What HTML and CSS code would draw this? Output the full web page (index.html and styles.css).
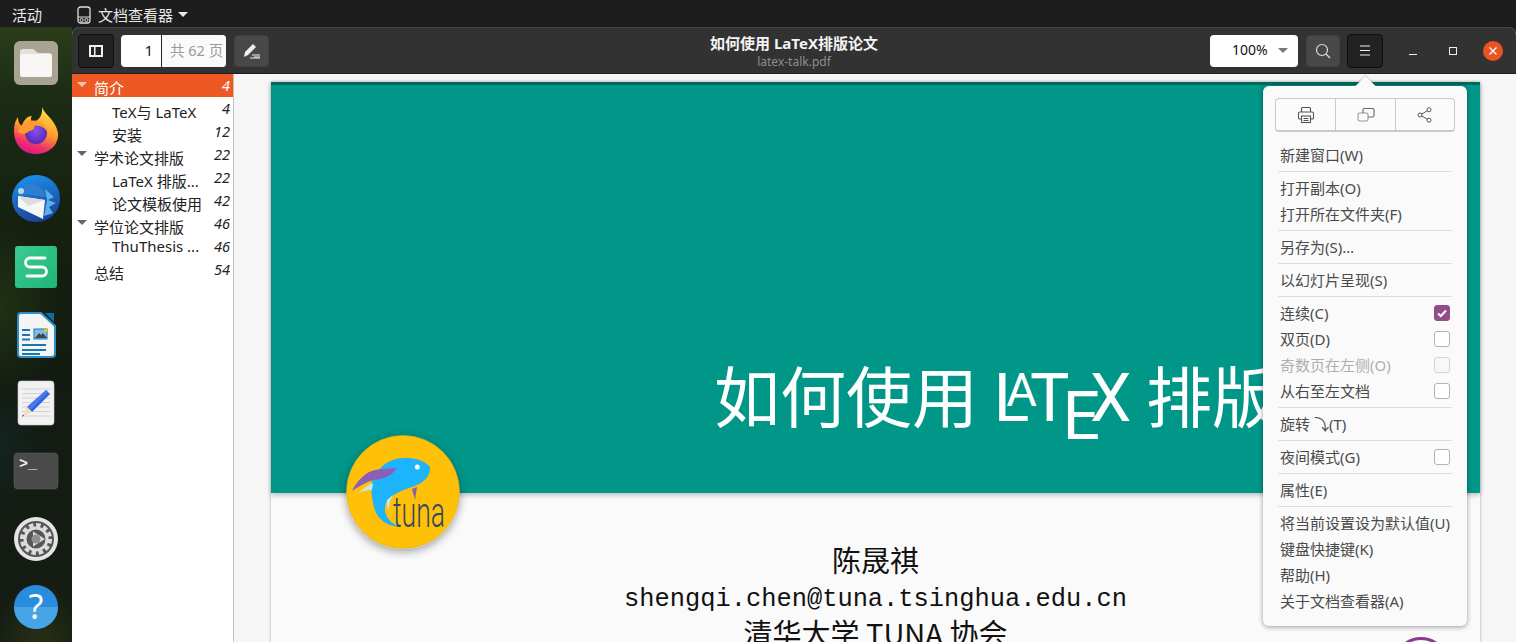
FILE: index.html
```html
<!DOCTYPE html>
<html lang="zh-CN">
<head>
<meta charset="utf-8">
<title>如何使用 LaTeX排版论文</title>
<link rel="stylesheet" href="styles.css">
</head>
<body>
<header class="topbar">
  <span class="activities">活动</span>
  <span class="appmenu">
    <svg class="appicon" width="14" height="18" viewBox="0 0 14 18"><rect x="1" y="1" width="12" height="16" rx="2.500" fill="none" stroke="#ddd" stroke-width="1.300"/><path d="M1 11h12" stroke="#ddd"/><circle cx="4.600" cy="14" r="1.600" fill="none" stroke="#ddd"/><circle cx="9.400" cy="14" r="1.600" fill="none" stroke="#ddd"/></svg>
    <span>文档查看器</span><i class="tri tri-top"></i>
  </span>
</header>
<div class="desktop">
  <nav class="dock">
    <svg class="dockicon" viewBox="0 0 48 48"><rect x="2" y="2" width="44" height="44" rx="6" fill="#a9a394"/><path d="M8 13a3 3 0 0 1 3-3h10l5 4h11a3 3 0 0 1 3 3v18a3 3 0 0 1-3 3H11a3 3 0 0 1-3-3z" fill="#e4e1da"/><path d="M8 18a3 3 0 0 1 3-3h26a3 3 0 0 1 3 3v17a3 3 0 0 1-3 3H11a3 3 0 0 1-3-3z" fill="#f8f7f5"/></svg>
    <svg class="dockicon" viewBox="0 0 48 48"><defs><linearGradient id="ff" x1="0.7" y1="0" x2="0.35" y2="1"><stop offset="0" stop-color="#ffe14a"/><stop offset="0.5" stop-color="#ff9a2a"/><stop offset="0.8" stop-color="#f0306a"/><stop offset="1" stop-color="#d9168c"/></linearGradient><radialGradient id="ffp" cx="0.5" cy="0.4" r="0.7"><stop offset="0" stop-color="#8a50ef"/><stop offset="1" stop-color="#4a22a8"/></radialGradient></defs><path d="M30 0C32 7 44 13 46 26 47 38 37 47 24 47 11 47 2 38 2 24 2 18 3 14 6 10 6 15 8 18 10 19 11 14 15 9 20 9 18 12 19 15 22 15 27 13 31 8 30 0Z" fill="url(#ff)"/><circle cx="24" cy="26" r="11" fill="url(#ffp)"/><path d="M6 25C8 16 18 11 28 15 34 18 36 22 36 26 33 20 27 18 22 19 24 21 20 24 17 24 15 27 10 28 6 25Z" fill="#ff9a2e"/></svg>
    <svg class="dockicon" viewBox="0 0 48 48"><defs><linearGradient id="tb" x1="0.3" y1="0" x2="0.6" y2="1"><stop offset="0" stop-color="#1a90e8"/><stop offset="1" stop-color="#1c3f9a"/></linearGradient></defs><path d="M24 0C38 0 48 10 48 24 48 36 38 47 24 47 10 47 0 36 0 24 0 12 10 0 24 0Z" fill="url(#tb)"/><path d="M6 22C8 12 14 9 20 9 26 9 32 14 34 22L12 19Z" fill="#2e7fd2"/><path d="M6 21l27 4-2 19-25-12z" fill="#f6f6f6"/><path d="M6 21l27 4-17 6z" fill="#dcdcdc"/><path d="M33 14l9 8-6 3 8 3-7 4 4 6-9 3 3-16z" fill="#5ab0ec"/><circle cx="9" cy="16" r="3" fill="#bcd8f2"/></svg>
    <svg class="dockicon" viewBox="0 0 48 48"><defs><linearGradient id="wps" x1="0" y1="0" x2="1" y2="1"><stop offset="0" stop-color="#3acb91"/><stop offset="1" stop-color="#1fb578"/></linearGradient></defs><rect x="3" y="3" width="42" height="42" rx="3" fill="url(#wps)"/><path d="M33 15H18a4.500 4.500 0 0 0 0 9h12a4.500 4.500 0 0 1 0 9H15" fill="none" stroke="#fff" stroke-width="2.800" stroke-linecap="round"/></svg>
    <svg class="dockicon" viewBox="0 0 48 48"><path d="M9 2h20l14 13v28a3 3 0 0 1-3 3H9a3 3 0 0 1-3-3V5a3 3 0 0 1 3-3z" fill="#f4f4f4" stroke="#2b8ec4" stroke-width="2"/><path d="M33 2h9v9z" fill="#0f6ea6"/><path d="M10 18h8v2h-8zM10 23h8v2h-8zM10 27.500h8v2h-8zM10 33h24v2H10zM10 38h24v2H10zM10 42h18v2H10z" fill="#1878b6"/><rect x="22" y="18" width="13" height="10" fill="#7fbfe6" stroke="#1878b6"/><path d="M23 27l4-5 2 2 2-2 4 5z" fill="#444"/><rect x="32" y="18" width="3" height="3" fill="#f2c300"/></svg>
    <svg class="dockicon" viewBox="0 0 48 48"><rect x="6" y="2" width="36" height="44" rx="3" fill="#f1f1f1" stroke="#cfcfcf" stroke-width="0.600"/><path d="M10 10h28M10 14.500h28M10 19h28M10 23.500h28M10 28h28M10 32.500h28M10 37h28" stroke="#d2d2d2" stroke-width="1"/><path d="M34 11l4 4-18 18-5-5z" fill="#3262e0"/><path d="M34 11l2 2-18 18-2-2z" fill="#4a7cf0"/><path d="M15 28l5 5-10 5z" fill="#f5dcbc"/><path d="M12 36.500l-2 1.500 1-2.500z" fill="#444"/></svg>
    <svg class="dockicon" viewBox="0 0 48 48"><rect x="2" y="6" width="44" height="36" rx="4" fill="#4a4a4a" stroke="#5c5c5c" stroke-width="0.600"/><text class="termtext" x="7" y="21">&gt;_</text></svg>
    <svg class="dockicon" viewBox="0 0 48 48"><circle cx="24" cy="24" r="22" fill="#e4e4e4"/><circle cx="24" cy="24" r="18" fill="#565656"/><circle cx="24" cy="24" r="14" fill="none" stroke="#dcdcdc" stroke-width="4" stroke-dasharray="4.500 2.800"/><circle cx="24" cy="24" r="11" fill="none" stroke="#dcdcdc" stroke-width="3"/><path d="M21 16.500L33 24 21 31.500z" fill="#dcdcdc"/><circle cx="24" cy="24" r="4.500" fill="#8f8f8f"/></svg>
    <svg class="dockicon" viewBox="0 0 48 48"><circle cx="24" cy="24" r="22" fill="#2a8cdf"/><path d="M2 24h44a22 22 0 0 1-44 0z" fill="#45a5e6"/><text class="helptext" x="24" y="36">?</text></svg>
  </nav>

  <div class="window">
    <div class="headerbar">
      <div class="hb-left">
        <button class="btn btn-on btn-w36"><svg width="14" height="12" viewBox="0 0 14 12"><rect x="1" y="1" width="12" height="10" fill="none" stroke="#f2f2f2" stroke-width="2"/><rect x="5" y="1" width="1.500" height="10" fill="#f2f2f2"/></svg></button>
        <div class="spinner"><span class="pg-cur">1</span><span class="pg-total">共 62 页</span></div>
        <button class="btn btn-gray btn-w35"><svg width="18" height="16" viewBox="0 0 18 16"><path d="M10 1l3 3-8 8-4 2 1-5z" fill="#f0f0f0"/><path d="M9 12h8M11 14h6M7 15h10" stroke="#f0f0f0" stroke-width="1"/></svg></button>
      </div>
      <div class="hb-title">
        <div class="title">如何使用 LaTeX排版论文</div>
        <div class="subtitle">latex-talk.pdf</div>
      </div>
      <div class="hb-right">
        <div class="zoombox"><span>100%</span><i class="tri tri-zoom"></i></div>
        <button class="btn btn-gray btn-w34"><svg width="16" height="16" viewBox="0 0 16 16"><circle cx="7" cy="7" r="5.500" fill="none" stroke="#ddd" stroke-width="1.200"/><path d="M11 11l4 4" stroke="#ddd" stroke-width="1.300"/></svg></button>
        <button class="btn btn-on btn-w36"><svg width="12" height="11" viewBox="0 0 12 11"><path d="M1 1h10M1 5.500h10M1 10h10" stroke="#f2f2f2" stroke-width="1"/></svg></button>
        <div class="winctl">
          <span class="wc"><svg width="10" height="10" viewBox="0 0 10 10"><path d="M1 8.500h8" stroke="#eee" stroke-width="1"/></svg></span>
          <span class="wc"><svg width="10" height="10" viewBox="0 0 10 10"><rect x="1.500" y="1.500" width="7" height="7" fill="none" stroke="#eee" stroke-width="1"/></svg></span>
          <span class="wc wc-close"><svg width="10" height="10" viewBox="0 0 10 10"><path d="M1 1l8 8M9 1l-8 8" stroke="#fff" stroke-width="1.300"/></svg></span>
        </div>
      </div>
    </div>

    <div class="main">
      <aside class="sidebar">
        <div class="row row-sel"><i class="tri tri-sel"></i><span class="lbl">简介</span><em>4</em></div>
        <div class="row sub"><span class="lbl">TeX与 LaTeX</span><em>4</em></div>
        <div class="row sub"><span class="lbl">安装</span><em>12</em></div>
        <div class="row"><i class="tri tri-side"></i><span class="lbl">学术论文排版</span><em>22</em></div>
        <div class="row sub"><span class="lbl">LaTeX 排版...</span><em>22</em></div>
        <div class="row sub"><span class="lbl">论文模板使用</span><em>42</em></div>
        <div class="row"><i class="tri tri-side"></i><span class="lbl">学位论文排版</span><em>46</em></div>
        <div class="row sub latin"><span class="lbl">ThuThesis ...</span><em>46</em></div>
        <div class="row plain"><span class="lbl">总结</span><em>54</em></div>
      </aside>
      <section class="viewer">
        <article class="slide">
          <div class="slide-head">
            <h1 class="slide-title">如何使用 <span class="latex"><span class="l-l">L</span><span class="l-a">A</span><span class="l-t">T</span><span class="l-e">E</span><span class="l-x">X</span></span> 排版</h1>
          </div>
          <div class="slide-body">
            <div class="author">陈晟祺</div>
            <div class="email">shengqi.chen@tuna.tsinghua.edu.cn</div>
            <div class="org">清华大学 TUNA 协会</div>
          </div>
          <div class="avatar">
            <svg width="114" height="114" viewBox="0 0 114 114">
              <circle cx="57" cy="57" r="56.500" fill="#ffc107" stroke="#d9a520" stroke-width="0.600"/>
              <path d="M47 25C60 20 78 24 84 32 85 42 76 49 66 52 56 55 44 60 40 68 36 78 43 88 54 92 40 91 31 84 28 72 25 60 24 50 27 44 30 36 38 28 47 25Z" fill="#1eb4fb"/>
              <path d="M51 33C40 34 28 33 20 39 13 44 9 50 6 56 13 51 20 47 28 45 37 44 46 41 51 33Z" fill="#8a5fb5"/>
              <path d="M12 58C17 54 22 50 27 48L26 55C21 55 16 56 12 58Z" fill="#c9e6e0"/>
              <path d="M66 54L71 52 69 65Z" fill="#8a5fb5"/>
              <path d="M41 65L47 60C44 65 43 70 43 75 41 72 40 69 41 65Z" fill="#c9e6e0"/>
              <circle cx="71.300" cy="32" r="2.500" fill="#fff"/>
              <text class="tuna" x="47" y="91.500" textLength="52" lengthAdjust="spacingAndGlyphs">tuna</text>
            </svg>
          </div>
          <div class="ring"></div>
        </article>
      </section>
    </div>

    <div class="popover">
      <div class="tools">
        <button class="tool"><svg width="18" height="18" viewBox="0 0 18 18"><path d="M4.500 6V2.500a1 1 0 0 1 1-1h7a1 1 0 0 1 1 1V6M4.500 13H2.500a1 1 0 0 1-1-1V7.500a1.500 1.500 0 0 1 1.500-1.500h12a1.500 1.500 0 0 1 1.500 1.500V12a1 1 0 0 1-1 1h-2" fill="none" stroke="#555" stroke-width="1.100"/><rect x="4.500" y="10" width="9" height="6.500" fill="none" stroke="#555" stroke-width="1.100"/><path d="M6.500 12.500h5M6.500 14.500h5" stroke="#555"/></svg></button>
        <button class="tool"><svg width="18" height="16" viewBox="0 0 18 16"><rect x="1" y="6" width="10" height="8" rx="1.500" fill="none" stroke="#999" stroke-width="1.100"/><path d="M6 6V3a1.500 1.500 0 0 1 1.500-1.500h8A1.500 1.500 0 0 1 17 3v5.500a1.500 1.500 0 0 1-1.500 1.500H11" fill="none" stroke="#666" stroke-width="1.100"/></svg></button>
        <button class="tool"><svg width="16" height="16" viewBox="0 0 16 16"><circle cx="3" cy="8" r="2" fill="none" stroke="#555"/><circle cx="12" cy="2.800" r="2" fill="none" stroke="#555"/><circle cx="12" cy="13.200" r="2" fill="none" stroke="#555"/><path d="M4.800 7l5.400-3.200M4.800 9l5.400 3.200" stroke="#555"/></svg></button>
      </div>
      <div class="mi">新建窗口(W)</div>
      <div class="sep"></div>
      <div class="mi">打开副本(O)</div>
      <div class="mi">打开所在文件夹(F)</div>
      <div class="sep"></div>
      <div class="mi">另存为(S)…</div>
      <div class="sep"></div>
      <div class="mi">以幻灯片呈现(S)</div>
      <div class="sep"></div>
      <div class="mi"><span>连续(C)</span><i class="cb cb-on"><svg width="12" height="12" viewBox="0 0 12 12"><path d="M2 6.500l2.800 2.500L10 3.500" fill="none" stroke="#fff" stroke-width="2"/></svg></i></div>
      <div class="mi"><span>双页(D)</span><i class="cb"></i></div>
      <div class="mi mi-off"><span>奇数页在左侧(O)</span><i class="cb cb-off"></i></div>
      <div class="mi"><span>从右至左文档</span><i class="cb"></i></div>
      <div class="sep"></div>
      <div class="mi">旋转 ⤵(T)</div>
      <div class="sep"></div>
      <div class="mi"><span>夜间模式(G)</span><i class="cb"></i></div>
      <div class="sep"></div>
      <div class="mi">属性(E)</div>
      <div class="sep"></div>
      <div class="mi">将当前设置设为默认值(U)</div>
      <div class="mi">键盘快捷键(K)</div>
      <div class="mi">帮助(H)</div>
      <div class="mi">关于文档查看器(A)</div>
    </div>
  </div>
</div>
</body>
</html>
```
FILE: styles.css
```css
* { box-sizing: border-box; }
html, body { margin: 0; height: 100%; }
body {
  width: 1516px;
  height: 642px;
  overflow: hidden;
  background: #1d1d1d;
  font-family: "Noto Sans", "Noto Sans CJK SC", sans-serif;
  display: flex;
  flex-direction: column;
}
button { padding: 0; font: inherit; }

.topbar {
  height: 27px;
  flex: none;
  background: #1d1d1d;
  color: #e8e8e8;
  font-size: 15px;
  display: flex;
  align-items: center;
  padding: 2px 0 0 12px;
}
.activities { width: 65px; }
.appmenu { display: flex; align-items: center; }
.appicon { margin-right: 7px; }
.tri { display: block; width: 0; height: 0; border-style: solid; border-color: transparent; border-width: 5px 5px 0; }
.tri-top { border-top-color: #e8e8e8; margin-left: 5px; }

.desktop { flex: 1; display: flex; min-height: 0; }

.dock {
  width: 72px;
  flex: none;
  display: flex;
  flex-direction: column;
  align-items: center;
  gap: 20px;
  padding-top: 12px;
  background:
    radial-gradient(ellipse 60px 90px at 0 280px, rgba(55,85,25,.35), transparent),
    radial-gradient(ellipse 50px 70px at 40px 620px, rgba(70,80,20,.4), transparent),
    radial-gradient(ellipse 40px 60px at 0 420px, rgba(20,50,60,.4), transparent),
    linear-gradient(180deg, #2c3d1b 0, #1c2c15 70px, #15200f 200px, #131b12 360px, #141c14 642px);
}
.dockicon { width: 48px; height: 48px; flex: none; display: block; }
.termtext { font: 700 15px "Liberation Mono", monospace; fill: #f0f0f0; }
.helptext { font: 400 34px "Noto Sans", sans-serif; fill: #fff; text-anchor: middle; }

.window {
  flex: 1;
  min-width: 0;
  position: relative;
  display: flex;
  flex-direction: column;
  background: #f6f6f6;
  border-radius: 8px 8px 0 0;
  overflow: hidden;
}
.headerbar {
  height: 47px;
  flex: none;
  display: grid;
  grid-template-columns: 1fr auto 1fr;
  align-items: center;
  background: #333232;
  border-top: 1px solid #454545;
  border-bottom: 1px solid #201f1f;
  color: #fff;
}
.hb-left { display: flex; align-items: center; padding-left: 6px; }
.hb-right { display: flex; align-items: center; justify-content: flex-end; }
.btn {
  display: flex; align-items: center; justify-content: center;
  border-radius: 4px; height: 32px;
}
.btn-on { background: #222; border: 1px solid #0e0e0e; height: 34px; }
.btn-gray { background: #484848; border: 1px solid #404040; }
.btn-w36 { width: 36px; }
.btn-w35 { width: 35px; margin-left: 8px; }
.btn-w34 { width: 34px; margin: 0 7px 0 8px; }
.spinner {
  width: 105px; height: 32px; margin-left: 7px;
  display: flex; background: #fff; border-radius: 4px; overflow: hidden;
  font-size: 14.500px; line-height: 30px;
}
.pg-cur { width: 41px; text-align: right; padding-right: 8px; color: #111; border-right: 1px solid #222; flex: none; }
.pg-total { padding-left: 8px; background: #fafafa; color: #9a9a9a; flex: 1; white-space: nowrap; }
.hb-title { text-align: center; }
.title { font-size: 15px; font-weight: 700; line-height: 18px; color: #f4f4f4; margin-top: 2px; }
.subtitle { font-size: 12px; line-height: 16px; color: #8d8d8d; margin-top: 2px; }
.zoombox {
  width: 88px; height: 32px;
  background: #fff; border-radius: 4px;
  display: flex; align-items: center;
  padding: 0 0 2px 22px; color: #111; font-size: 14px;
}
.tri-zoom { border-top-color: #777; margin: 2px 0 0 10px; }
.winctl { display: flex; margin: 0 3px 0 10px; }
.wc { width: 40px; height: 34px; display: flex; align-items: center; justify-content: center; }
.wc-close svg { background: #e95420; border-radius: 50%; width: 20px; height: 20px; padding: 5px; }

.main { flex: 1; min-height: 0; display: flex; }
.sidebar {
  width: 162px; flex: none;
  background: #fff;
  border-right: 1px solid #c2c0be;
  color: #222;
  font-size: 15px;
}
.row {
  height: 23px;
  display: flex; align-items: center;
  padding: 0 3px 0 5px;
}
.row .lbl { flex: 1; white-space: nowrap; padding-left: 7px; line-height: 23px; margin-top: 7px; }
.row em { font-size: 14.500px; line-height: 23px; margin-top: -1px; }
.row.sub .lbl { padding-left: 35px; }
.row.latin .lbl { margin-top: -1px; }
.row.plain .lbl { padding-left: 17px; }
.row.row-sel .lbl { margin-top: 5px; }
.row-sel { background: #ee5823; color: #fff; }
.tri-sel { border-top-color: #f7c9b5; margin-top: -3px; }
.tri-side { border-top-color: #666; margin-top: -3px; }

.viewer { flex: 1; min-width: 0; padding: 8px 36px 0 37px; overflow: hidden; }
.slide {
  width: 1209px;
  height: 640px;
  background: #fafafa;
  position: relative;
  box-shadow: 0 0 3px rgba(0,0,0,.3);
}
.slide-head {
  height: 411px;
  background: #009688;
  border-top: 3px solid #00695c;
  box-shadow: 0 2px 5px rgba(0,0,0,.25);
  padding: 260px 0 0 443px;
}
.slide-title {
  margin: 0;
  font-family: "Noto Sans CJK SC", sans-serif;
  font-size: 66px;
  line-height: 90px;
  font-weight: 400;
  color: #fff;
  white-space: nowrap;
}
.latex { font-family: Roboto, "Liberation Sans", sans-serif; font-weight: 400; display: inline-block; margin-left: 1px; vertical-align: 1px; }
.l-a { font-size: 47px; vertical-align: 15px; margin-left: -23px; margin-right: -7px; }
.l-e { vertical-align: -18px; margin-left: -7px; margin-right: -10px; }
.slide-body { text-align: center; color: #111; padding-top: 47px; }
.author { font: 400 29px/38px "Noto Sans CJK SC", sans-serif; }
.email { font: 400 25.400px/38px "Liberation Mono", monospace; margin-top: 3px; }
.org { font: 400 29px/38px "Noto Sans CJK SC", sans-serif; margin-top: -6px; }
.avatar {
  position: absolute; left: 75px; top: 353px;
  width: 114px; height: 114px; border-radius: 50%;
  box-shadow: 0 3px 8px rgba(0,0,0,.35);
}
.avatar svg { display: block; }
.tuna { font: 300 43px Roboto, "Liberation Sans", sans-serif; fill: #34495e; }
.ring {
  position: absolute; left: 1122px; top: 555px;
  width: 56px; height: 56px; border-radius: 50%;
  border: 3px solid #8e3b8e;
}

.popover {
  position: absolute; left: 1191px; top: 59px;
  width: 204px;
  padding: 12px;
  background: #fafafa;
  border-radius: 6px;
  box-shadow: 0 1px 5px rgba(0,0,0,.4);
  color: #4a4a4a;
  font-size: 15px;
}
.popover::before {
  content: "";
  position: absolute; left: 95px; top: -7px;
  width: 15px; height: 15px;
  background: #fafafa;
  transform: rotate(45deg);
  box-shadow: -1px -1px 1px rgba(0,0,0,.12);
}
.tools {
  position: relative;
  display: flex; height: 34px; margin-bottom: 10px;
  border: 1px solid #cdc9c5; border-bottom-width: 2px; border-radius: 4px;
  background: #fbfbfb;
}
.tool {
  flex: none; width: 60px; display: flex; align-items: center; justify-content: center;
  background: none; border: 0; border-right: 1px solid #cdc9c5;
}
.tool:last-child { border-right: 0; flex: 1; width: auto; }
.mi {
  position: relative;
  height: 26px; padding: 0 5px 2px;
  display: flex; align-items: center; justify-content: space-between;
  white-space: nowrap;
}
.mi-off { color: #b0aeab; }
.sep { height: 7px; padding-top: 3px; }
.sep::after { content: ""; display: block; height: 1px; background: #dfdddb; margin: 0 3px; }
.cb {
  width: 16px; height: 16px; border-radius: 3px; margin-top: 2px;
  border: 1px solid #b5b2af; background: #fff;
  display: flex; align-items: center; justify-content: center;
}
.cb-on { background: #924d8b; border-color: #924d8b; }
.cb-off { background: #f8f8f8; border-color: #d5d3d0; }
```
